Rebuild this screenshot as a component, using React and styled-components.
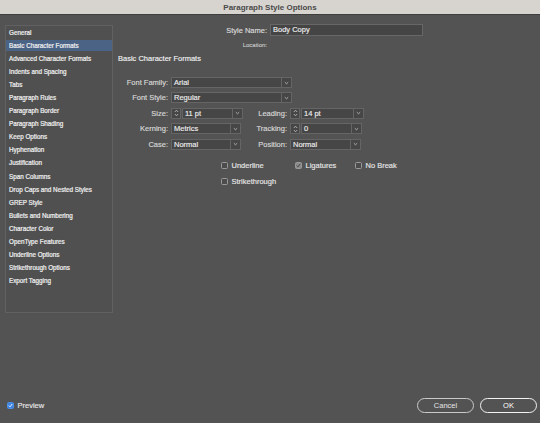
import styled, { createGlobalStyle } from "styled-components";

const GlobalStyle = createGlobalStyle`
  html, body {
    margin: 0;
    padding: 0;
    background: #535353;
  }
  body {
    font-family: "Liberation Sans", Arial, sans-serif;
  }
  * { box-sizing: border-box; }
`;

const Window = styled.div`
  width: 540px;
  height: 423px;
  display: flex;
  flex-direction: column;
  background: #535353;
  overflow: hidden;
`;

const TitleBar = styled.div`
  height: 15px;
  flex: none;
  display: flex;
  align-items: center;
  justify-content: center;
  background: #d7d3cf;
  border-bottom: 1px solid #3e3e3e;
  color: #4a4a4a;
  font-size: 8px;
  font-weight: bold;
`;

const Body = styled.div`
  flex: 1;
  display: flex;
  flex-direction: column;
  padding: 9px 3px 10px 5px;
`;

const Content = styled.div`
  display: flex;
  gap: 5px;
`;

const Sidebar = styled.div`
  width: 108px;
  height: 288px;
  margin-top: 1px;
  border: 1px solid #616161;
  background: #505050;
  display: flex;
  flex-direction: column;
  gap: 2.1px;
  padding-top: 0.5px;
`;

const NavItem = styled.div`
  height: 11px;
  line-height: 11px;
  padding-left: 3px;
  font-size: 6.3px;
  color: #f2f2f2;
  -webkit-text-stroke: 0.2px #f2f2f2;
  white-space: nowrap;
  background: ${(p) => (p.$active ? "#4b6384" : "transparent")};
`;

const Main = styled.div`
  flex: 1;
  display: flex;
  flex-direction: column;
`;

const NameRow = styled.div`
  display: flex;
  align-items: center;
  gap: 3px;
  height: 12px;
`;

const NameLabel = styled.div`
  width: 149px;
  text-align: right;
  font-size: ${(p) => p.$size || "7.5px"};
  color: ${(p) => p.$color || "#dcdcdc"};
  -webkit-text-stroke: 0.15px ${(p) => p.$color || "#dcdcdc"};
`;

const TextInput = styled.div`
  width: 153px;
  height: 12px;
  line-height: 10px;
  padding-left: 2px;
  background: #454545;
  border: 1px solid #676767;
  font-size: 7.5px;
  color: #efefef;
  -webkit-text-stroke: 0.15px #efefef;
`;

const LocationRow = styled.div`
  height: 9px;
  line-height: 9px;
  margin-top: 4.5px;
  display: flex;
`;

const Heading = styled.div`
  margin-top: 4px;
  height: 9px;
  line-height: 9px;
  font-size: 7.5px;
  color: #f0f0f0;
  -webkit-text-stroke: 0.15px #f0f0f0;
`;

const FormGrid = styled.div`
  margin-top: 14.5px;
  display: grid;
  grid-template-columns: 50px 72px 41px 76px;
  grid-auto-rows: 11px;
  column-gap: 3px;
  row-gap: 4.4px;
  align-items: center;
`;

const Label = styled.div`
  text-align: right;
  font-size: 7.5px;
  line-height: 11px;
  color: #d8d8d8;
  -webkit-text-stroke: 0.15px #d8d8d8;
  white-space: nowrap;
`;

const Field = styled.div`
  display: flex;
  height: 11px;
  width: ${(p) => p.$w}px;
  grid-column: ${(p) => p.$span || "auto"};
  gap: 1px;
`;

const SelectBox = styled.div`
  flex: 1;
  display: flex;
  background: #464646;
  border: 1px solid #656565;
`;

const Value = styled.div`
  flex: 1;
  padding-left: 2px;
  font-size: 7.5px;
  line-height: 9px;
  color: #ededed;
  -webkit-text-stroke: 0.15px #ededed;
  white-space: nowrap;
`;

const Arrow = styled.div`
  width: 10px;
  border-left: 1px solid #656565;
  display: flex;
  align-items: center;
  justify-content: center;
`;

const SpinBox = styled.div`
  width: 10px;
  flex: none;
  background: #464646;
  border: 1px solid #656565;
  display: flex;
  align-items: center;
  justify-content: center;
`;

const Chevron = () => (
  <svg width="5" height="4" viewBox="0 0 5 4">
    <path d="M0.8 1.2 L2.5 2.8 L4.2 1.2" fill="none" stroke="#c8c8c8" strokeWidth="0.8" />
  </svg>
);

const SpinIcon = () => (
  <svg width="5" height="8" viewBox="0 0 5 8">
    <path d="M0.8 3 L2.5 1.2 L4.2 3 M0.8 5 L2.5 6.8 L4.2 5" fill="none" stroke="#c8c8c8" strokeWidth="0.8" />
  </svg>
);

const Select = ({ value, w, span, spin }) => (
  <Field $w={w} $span={span}>
    {spin && (
      <SpinBox>
        <SpinIcon />
      </SpinBox>
    )}
    <SelectBox>
      <Value>{value}</Value>
      <Arrow>
        <Chevron />
      </Arrow>
    </SelectBox>
  </Field>
);

const Checks = styled.div`
  margin-top: 11.5px;
  padding-left: 103px;
  display: grid;
  grid-template-columns: 74px 60px auto;
  grid-auto-rows: 9px;
  row-gap: 7px;
  align-items: center;
`;

const CheckItem = styled.label`
  display: flex;
  align-items: center;
  gap: 3.5px;
  font-size: 7.5px;
  color: #e6e6e6;
  -webkit-text-stroke: 0.15px #e6e6e6;
  white-space: nowrap;
`;

const Box = styled.span`
  width: 7px;
  height: 7px;
  border-radius: 1.5px;
  flex: none;
  display: flex;
  align-items: center;
  justify-content: center;
  border: 1px solid ${(p) => (p.$blue ? "#4a8ee6" : "#9a9a9a")};
  background: ${(p) => (p.$blue ? "#3f84e0" : p.$checked ? "#8c8c8c" : "#4c4c4c")};
`;

const Tick = ({ color }) => (
  <svg width="5" height="5" viewBox="0 0 5 5">
    <path d="M0.8 2.6 L2 3.8 L4.2 1" fill="none" stroke={color} strokeWidth="0.9" />
  </svg>
);

const Check = ({ label, checked, blue }) => (
  <CheckItem>
    <Box $checked={checked} $blue={blue}>
      {checked && <Tick color={blue ? "#ffffff" : "#3d3d3d"} />}
    </Box>
    {label}
  </CheckItem>
);

const Footer = styled.div`
  margin-top: auto;
  display: flex;
  align-items: center;
  justify-content: space-between;
  padding-left: 2px;
`;

const Buttons = styled.div`
  display: flex;
  gap: 6px;
`;

const Button = styled.button`
  width: 57px;
  height: 15px;
  border-radius: 8px;
  background: transparent;
  border: ${(p) => (p.$primary ? "1.5px solid #f2f2f2" : "1px solid #c9c9c9")};
  color: ${(p) => (p.$primary ? "#ffffff" : "#e6e6e6")};
  font-family: "Liberation Sans", Arial, sans-serif;
  font-size: 7.5px;
  padding: 0;
`;

const navItems = [
  "General",
  "Basic Character Formats",
  "Advanced Character Formats",
  "Indents and Spacing",
  "Tabs",
  "Paragraph Rules",
  "Paragraph Border",
  "Paragraph Shading",
  "Keep Options",
  "Hyphenation",
  "Justification",
  "Span Columns",
  "Drop Caps and Nested Styles",
  "GREP Style",
  "Bullets and Numbering",
  "Character Color",
  "OpenType Features",
  "Underline Options",
  "Strikethrough Options",
  "Export Tagging",
];

export default function App() {
  return (
    <Window>
      <GlobalStyle />
      <TitleBar>Paragraph Style Options</TitleBar>
      <Body>
        <Content>
          <Sidebar>
            {navItems.map((item) => (
              <NavItem key={item} $active={item === "Basic Character Formats"}>
                {item}
              </NavItem>
            ))}
          </Sidebar>
          <Main>
            <NameRow>
              <NameLabel>Style Name:</NameLabel>
              <TextInput>Body Copy</TextInput>
            </NameRow>
            <LocationRow>
              <NameLabel $size="6px" $color="#c4c4c4">Location:</NameLabel>
            </LocationRow>
            <Heading>Basic Character Formats</Heading>
            <FormGrid>
              <Label>Font Family:</Label>
              <Select value="Arial" w={121} span="2 / span 3" />
              <Label>Font Style:</Label>
              <Select value="Regular" w={121} span="2 / span 3" />
              <Label>Size:</Label>
              <Select value="11 pt" w={72} spin />
              <Label>Leading:</Label>
              <Select value="14 pt" w={74} spin />
              <Label>Kerning:</Label>
              <Select value="Metrics" w={70} />
              <Label>Tracking:</Label>
              <Select value="0" w={72} spin />
              <Label>Case:</Label>
              <Select value="Normal" w={70} />
              <Label>Position:</Label>
              <Select value="Normal" w={71} />
            </FormGrid>
            <Checks>
              <Check label="Underline" />
              <Check label="Ligatures" checked />
              <Check label="No Break" />
              <Check label="Strikethrough" />
            </Checks>
          </Main>
        </Content>
        <Footer>
          <Check label="Preview" checked blue />
          <Buttons>
            <Button>Cancel</Button>
            <Button $primary>OK</Button>
          </Buttons>
        </Footer>
      </Body>
    </Window>
  );
}
